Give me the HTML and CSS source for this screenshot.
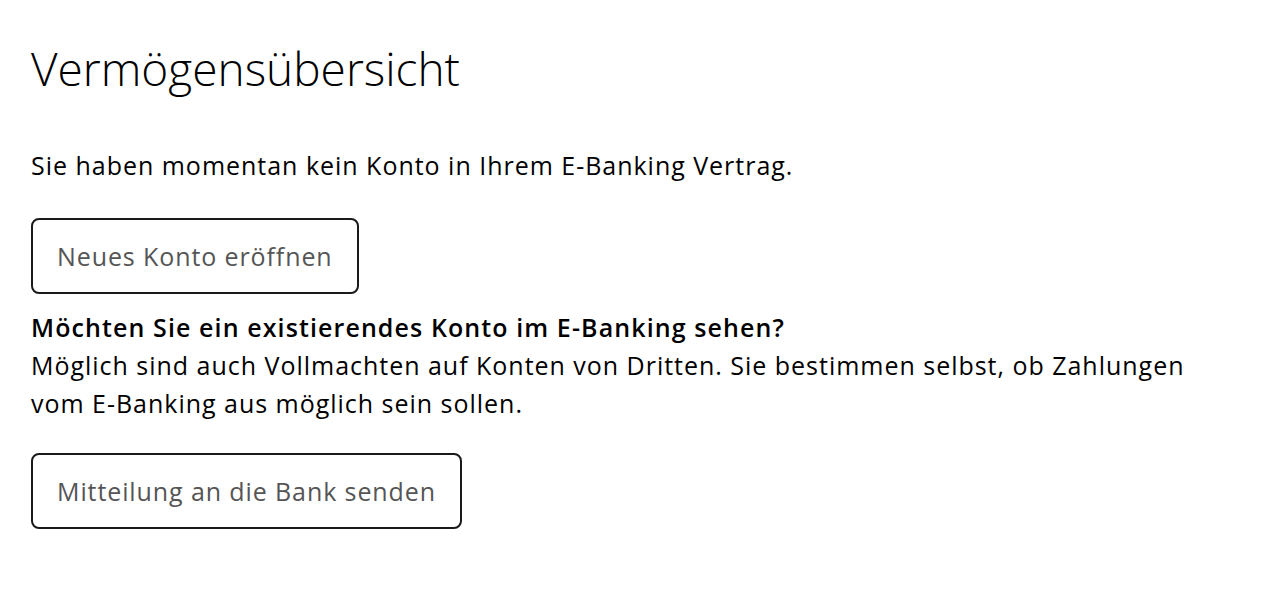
FILE: index.html
```html
<!DOCTYPE html>
<html lang="de">
<head>
<meta charset="utf-8">
<title>Vermögensübersicht</title>
<link rel="stylesheet" href="styles.css">
</head>
<body>
<main class="page">
  <h1 class="title">Vermögensübersicht</h1>
  <p class="text intro">Sie haben momentan kein Konto in Ihrem E-Banking Vertrag.</p>
  <button class="btn" type="button">Neues Konto eröffnen</button>
  <div class="info">
    <p class="text strong">Möchten Sie ein existierendes Konto im E-Banking sehen?</p>
    <p class="text">Möglich sind auch Vollmachten auf Konten von Dritten. Sie bestimmen selbst, ob Zahlungen<br>vom E-Banking aus möglich sein sollen.</p>
  </div>
  <button class="btn" type="button">Mitteilung an die Bank senden</button>
</main>
</body>
</html>
```
FILE: styles.css
```css
html, body {
  margin: 0;
  padding: 0;
  background: #ffffff;
}
body {
  font-family: "Open Sans", "Noto Sans", "Liberation Sans", sans-serif;
  color: #000000;
}
.page {
  display: flex;
  flex-direction: column;
  align-items: flex-start;
  padding: 30px 0 0 31px;
}
.title {
  margin: 0;
  font-size: 46px;
  font-weight: 300;
  line-height: 76px;
}
.text {
  margin: 0;
  font-size: 25px;
  line-height: 38px;
  letter-spacing: 0.98px;
}
.intro {
  margin-top: 40px;
}
.strong {
  font-weight: 600;
  letter-spacing: 1.1px;
}
.btn {
  margin-top: 34px;
  height: 76px;
  padding: 0 24px;
  border: 2px solid #1a1a1a;
  border-radius: 8px;
  background: #ffffff;
  color: #555555;
  font-family: inherit;
  font-size: 25px;
  letter-spacing: 0.9px;
}
.info {
  margin-top: 14px;
}
.info + .btn {
  margin-top: 31px;
}
```
